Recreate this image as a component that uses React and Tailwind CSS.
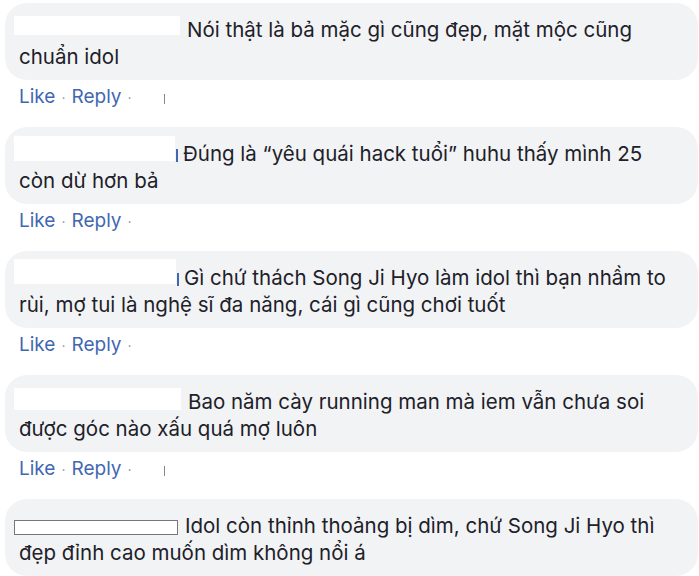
import React from "react";

const comments = [
  { box: "w-[166px] h-[19px] mt-[0px]", l1: "Nói thật là bả mặc gì cũng đẹp, mặt mộc cũng", l2: "chuẩn idol", tick: true },
  { box: "w-[161px] h-[25px] -mt-[4px]", l1: "Đúng là “yêu quái hack tuổi” huhu thấy mình 25", l2: "còn dừ hơn bả", sliver: true },
  { box: "w-[162px] h-[25px] -mt-[5px]", l1: "Gì chứ thách Song Ji Hyo làm idol thì bạn nhầm to", l2: "rùi, mợ tui là nghệ sĩ đa năng, cái gì cũng chơi tuốt", sliver: true },
  { box: "w-[167px] h-[22px] mt-[0px]", l1: "Bao năm cày running man mà iem vẫn chưa soi", l2: "được góc nào xấu quá mợ luôn", tick: true },
  { box: "w-[164px] h-[15px] mt-[8px] border border-[#777]", l1: "Idol còn thỉnh thoảng bị dìm, chứ Song Ji Hyo thì", l2: "đẹp đỉnh cao muốn dìm không nổi á", last: true },
];

export default function App() {
  return (
    <div
      className="w-[699px] h-[576px] bg-white overflow-hidden flex flex-col gap-[17px] pt-[3px] pl-[5px] pr-[1px]"
      style={{ fontFamily: "Inter, 'Liberation Sans', Arial, sans-serif" }}
    >
      {comments.map((c, i) => (
        <div key={i} className="flex flex-col shrink-0">
          <div className="bg-[#f2f3f5] rounded-[22px] pl-[14px] pr-[20px] pt-[13px] pb-[10px] text-[20.5px] leading-[27px] text-[#1d2129] whitespace-nowrap">
            <div className="flex items-start -ml-[5px] h-[27px]">
              <span className={`inline-block bg-white shrink-0 ${c.box}`}></span>
              {c.sliver ? (
                <span className="inline-block w-[2px] h-[13px] bg-[#4267b2] ml-[1px] mt-[9px] mr-[5px]"></span>
              ) : (
                <span className="inline-block w-[7px]"></span>
              )}
              <span>{c.l1}</span>
            </div>
            <div>{c.l2}</div>
          </div>
          {!c.last && (
            <div className="flex items-center h-[30px] pt-[4px] pl-[14px] text-[19px] text-[#4267b2]">
              <span>Like</span>
              <span className="mx-[6px] text-[#90949c] text-[14px]">·</span>
              <span>Reply</span>
              <span className="mx-[6px] text-[#90949c] text-[14px]">·</span>
              {c.tick && <span className="ml-[26px] w-[1px] h-[10px] bg-[#888] mt-[4px]"></span>}
            </div>
          )}
        </div>
      ))}
    </div>
  );
}
